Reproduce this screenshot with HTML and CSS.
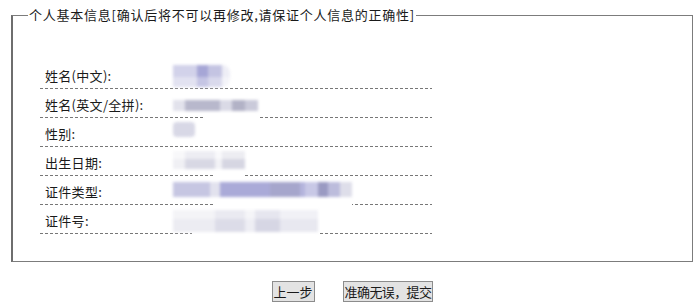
FILE: index.html
```html
<!DOCTYPE html>
<html lang="zh-CN">
<head>
<meta charset="utf-8">
<title>个人基本信息</title>
<link rel="stylesheet" href="styles.css">
</head>
<body>
<div class="page">
  <fieldset class="box">
    <legend class="box-title">个人基本信息[确认后将不可以再修改,请保证个人信息的正确性]</legend>
    <div class="rows">
      <div class="row r1"><span class="label">姓名(中文):</span><span class="val v1"></span></div>
      <div class="row r2"><span class="label">姓名(英文/全拼):</span><span class="val v2"></span></div>
      <div class="row r3"><span class="label">性别:</span><span class="val v3"></span></div>
      <div class="row r4"><span class="label">出生日期:</span><span class="val v4"></span></div>
      <div class="row r5"><span class="label">证件类型:</span><span class="val v5"></span></div>
      <div class="row r6"><span class="label">证件号:</span><span class="val v6"></span></div>
    </div>
  </fieldset>
  <div class="actions">
    <button class="btn" type="button">上一步</button>
    <button class="btn btn-wide" type="button">准确无误，提交</button>
  </div>
</div>
</body>
</html>
```
FILE: styles.css
```css
html, body {
  margin: 0;
  padding: 0;
  background: #fff;
}
body {
  font-family: "Noto Sans CJK SC", "Noto Sans", sans-serif;
  font-size: 13px;
  color: #1a1a1a;
}
.page {
  padding: 7px 7px 0 11px;
}
.box {
  margin: 0;
  padding: 0 0 27px 0;
  border: 1px solid #7c7c7c;
  border-left: 2px solid #6e6e6e;
  min-width: 0;
}
.box-title {
  margin-left: 15px;
  padding: 0 1px;
  font-size: 13px;
  line-height: 16px;
  letter-spacing: 0.75px;
  color: #1a1a1a;
}
.rows {
  margin: 37px 0 0 27px;
  width: 392px;
  display: flex;
  flex-direction: column;
}
.row {
  height: 28px;
  padding-bottom: 1px;
  display: flex;
  align-items: flex-end;
  background-image: linear-gradient(to right, #777 0 3px, transparent 3px 5px);
  background-size: 5px 1px;
  background-repeat: repeat-x;
  background-position: left bottom;
}
.label {
  width: 128px;
  padding: 0 0 3px 5px;
  line-height: 18px;
  letter-spacing: 0.3px;
  flex: none;
}
.val {
  display: block;
  flex: none;
  filter: blur(1.4px);
}
/* white breaks in the dashed rules where the masked values overlap them */
.r2 { background-image: linear-gradient(to right, transparent 165px, #fff 165px 218px, transparent 218px), linear-gradient(to right, #777 0 3px, transparent 3px 5px); background-size: 100% 1px, 5px 1px; background-repeat: no-repeat, repeat-x; background-position: left bottom, left bottom; }
.r4 { background-image: linear-gradient(to right, transparent 175px, #fff 175px 205px, transparent 205px), linear-gradient(to right, #777 0 3px, transparent 3px 5px); background-size: 100% 1px, 5px 1px; background-repeat: no-repeat, repeat-x; background-position: left bottom, left bottom; }
.r5 { background-image: linear-gradient(to right, transparent 173px, #fff 173px 312px, transparent 312px), linear-gradient(to right, #777 0 3px, transparent 3px 5px); background-size: 100% 1px, 5px 1px; background-repeat: no-repeat, repeat-x; background-position: left bottom, left bottom; }
.r6 { background-image: linear-gradient(to right, transparent 152px, #fff 152px 280px, transparent 280px), linear-gradient(to right, #777 0 3px, transparent 3px 5px); background-size: 100% 1px, 5px 1px; background-repeat: no-repeat, repeat-x; background-position: left bottom, left bottom; }

.v1 {
  width: 57px; height: 22px; margin-bottom: 1px;
  background:
    linear-gradient(to bottom, transparent 0 55%, rgba(255,255,255,.35) 55%),
    linear-gradient(90deg, #d2d2ea 0 24px, #a6a6d6 24px 35px, #c4c4e2 35px 49px, #eeeef6 49px 57px);
  border-radius: 0 8px 8px 0;
}
.v2 {
  width: 85px; height: 11px; margin-bottom: 6px;
  background: linear-gradient(90deg, #e2e2ec 0 12px, #b8b8cc 12px 47px, #dadae6 47px 59px, #b2b2c6 59px 72px, #cacada 72px 85px);
}
.v3 {
  width: 22px; height: 15px; margin-bottom: 9px;
  background: #d8d8e6;
  border-radius: 4px;
}
.v4 {
  width: 72px; height: 18px; margin-bottom: 6px;
  background:
    linear-gradient(to bottom, rgba(255,255,255,.55) 0 45%, transparent 45%),
    linear-gradient(90deg, #f0f0f4 0 12px, #d8d8e4 12px 42px, #f2f2f6 42px 49px, #d6d6e2 49px 72px);
}
.v5 {
  width: 179px; height: 15px; margin-bottom: 7px;
  background: linear-gradient(90deg, #c6c6e2 0 37px, #e2e2ee 37px 47px, #aaaad8 47px 97px, #a6a6cc 97px 127px, #b4b4dc 127px 132px, #c8c8e6 132px 145px, #9a9ac2 145px 155px, #bcbcdc 155px 167px, #dedeea 167px 179px);
}
.v6 {
  width: 145px; height: 22px; margin-bottom: 1px;
  background:
    linear-gradient(to bottom, rgba(255,255,255,.4) 0 40%, transparent 40%),
    linear-gradient(90deg, #ececf2 0 42px, #dcdce8 42px 72px, #eeeef4 72px 82px, #d6d6e4 82px 107px, #e8e8f0 107px 145px);
}

.actions {
  display: flex;
  justify-content: center;
  gap: 28px;
  margin-top: 19px;
  padding-left: 1px;
}
.btn {
  font-family: "Noto Sans CJK SC", "Noto Sans", sans-serif;
  font-size: 13px;
  line-height: 19px;
  height: 21px;
  padding: 0 1px;
  margin: 0;
  color: #1a1a1a;
  background: #e3e3e3;
  border: 1px solid #8c8c8c;
  border-radius: 0;
}
.btn-wide {
  letter-spacing: -0.6px;
}
```
